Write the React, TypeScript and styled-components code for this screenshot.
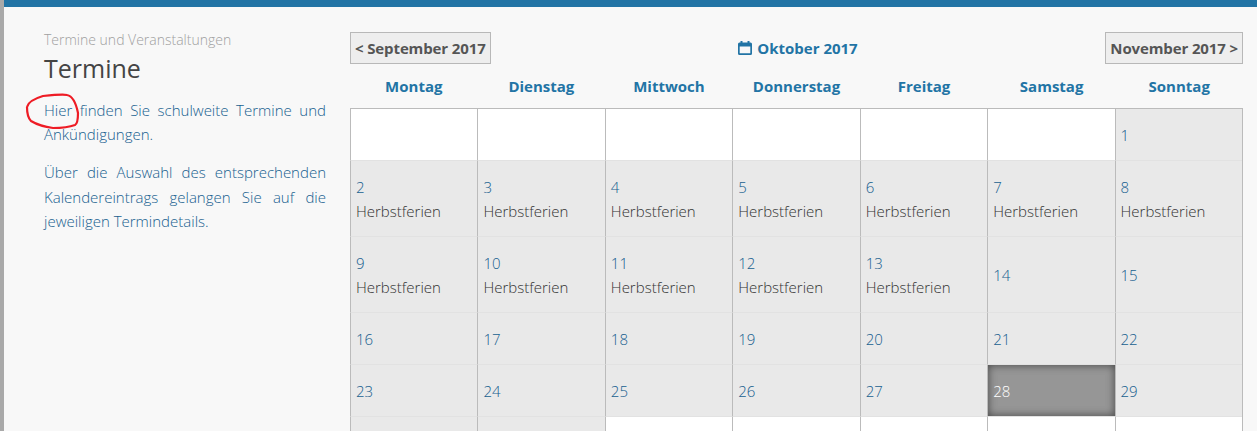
import styled, { createGlobalStyle } from 'styled-components';

const GlobalStyle = createGlobalStyle`
  html, body {
    margin: 0;
    height: 431px;
    overflow: hidden;
    background-color: #f8f8f8;
    font-family: 'Open Sans', sans-serif;
    font-size: 15px;
    color: #444444;
  }
`;

const Frame = styled.div`
  height: 431px;
  overflow: hidden;
  border-left: 4px solid #a9a9a9;
  box-sizing: border-box;
`;

const Page = styled.div`
  border-top: 7px solid #2274a5;
  display: flex;
  padding-left: 40px;
  gap: 24px;
`;

const Sidebar = styled.aside`
  position: relative;
  width: 282px;
  flex-shrink: 0;
  padding-top: 24px;
`;

const Breadcrumb = styled.div`
  font-size: 14px;
  line-height: 18px;
  font-weight: 300;
  color: #a0a0a0;
`;

const Title = styled.h1`
  margin: 2px 0 13px;
  font-size: 25px;
  line-height: 34px;
  font-weight: 400;
  color: #444444;
`;

const Text = styled.p`
  margin: 0 0 13.5px;
  font-size: 15px;
  line-height: 24.4px;
  font-weight: 300;
  color: #17608f;
  text-align: justify;
`;

const Scribble = styled.svg`
  position: absolute;
  left: -19px;
  top: 86px;
`;

const Main = styled.main`
  width: 893px;
  flex-shrink: 0;
`;

const Nav = styled.div`
  display: flex;
  justify-content: space-between;
  align-items: center;
  margin-top: 25px;
`;

const NavButton = styled.button`
  height: 32px;
  padding: 0 4px;
  background-color: #eeeeee;
  border: 1px solid #b8b8b8;
  font-family: inherit;
  font-size: 15px;
  font-weight: 700;
  letter-spacing: -0.12px;
  color: #555555;
`;

const Month = styled.div`
  display: flex;
  align-items: center;
  gap: 5px;
  font-size: 15px;
  font-weight: 700;
  color: #2274a5;
`;

const Weekdays = styled.div`
  display: grid;
  grid-template-columns: repeat(7, 1fr);
  height: 44px;
`;

const Weekday = styled.div`
  display: flex;
  align-items: center;
  justify-content: center;
  font-size: 15px;
  font-weight: 700;
  color: #2274a5;
`;

const Grid = styled.div`
  display: grid;
  grid-template-columns: repeat(7, 1fr);
  border-top: 1px solid #bbbbbb;
  border-right: 1px solid #bbbbbb;
`;

const Cell = styled.div<{ $filled?: boolean; $today?: boolean }>`
  box-sizing: border-box;
  display: flex;
  flex-direction: column;
  justify-content: center;
  min-height: 52px;
  padding: 14px 5px 13px;
  line-height: 24px;
  border-left: 1px solid #bbbbbb;
  border-bottom: 1px solid #e2e2e2;
  font-weight: 300;
  background-color: ${p => (p.$today ? '#969696' : p.$filled ? '#e9e9e9' : '#ffffff')};
  box-shadow: ${p => (p.$today ? 'inset 0 0 8px #444444' : 'none')};
`;

const DayNumber = styled.div<{ $today?: boolean }>`
  color: ${p => (p.$today ? '#ffffff' : '#17608f')};
`;

const Event = styled.div`
  color: #333333;
`;

const days = ['Montag', 'Dienstag', 'Mittwoch', 'Donnerstag', 'Freitag', 'Samstag', 'Sonntag'];
const holidays = [2, 3, 4, 5, 6, 7, 8, 9, 10, 11, 12, 13];
const cells: (number | null)[] = [
  null, null, null, null, null, null, 1,
  ...Array.from({ length: 30 }, (_, i) => i + 2),
  null, null, null, null, null,
];

function CalendarIcon() {
  return (
    <svg width="14" height="14" viewBox="0 0 14 14" fill="#2274a5">
      <rect x="2.5" y="0" width="2" height="3" />
      <rect x="9.5" y="0" width="2" height="3" />
      <path d="M1.5 1.5h11a1.5 1.5 0 0 1 1.5 1.5v9.5a1.5 1.5 0 0 1-1.5 1.5h-11a1.5 1.5 0 0 1-1.5-1.5V3a1.5 1.5 0 0 1 1.5-1.5zM1.7 5.5v6.8h10.6V5.5z" fillRule="evenodd" />
    </svg>
  );
}

export default function App() {
  return (
    <>
      <GlobalStyle />
      <Frame>
        <Page>
          <Sidebar>
            <Breadcrumb>Termine und Veranstaltungen</Breadcrumb>
            <Title>Termine</Title>
            <Text>Hier finden Sie schulweite Termine und Ankündigungen.</Text>
            <Text>
              Über die Auswahl des entsprechenden Kalendereintrags gelangen Sie auf die jeweiligen
              Termindetails.
            </Text>
            <Scribble width="60" height="40" viewBox="0 0 60 40">
              <path
                d="M2 14 C3 9 8 6 18 3 C28 2 38 1 42 2 C47 3 51 10 53 20 C53 27 52 31 50 32 C42 35 33 35 28 35 C20 34 11 31 6 28 C3 25 2 19 2 14"
                fill="none"
                stroke="#ee1c25"
                strokeWidth="2.2"
              />
            </Scribble>
          </Sidebar>
          <Main>
            <Nav>
              <NavButton>&lt; September 2017</NavButton>
              <Month>
                <CalendarIcon />
                Oktober 2017
              </Month>
              <NavButton>November 2017 &gt;</NavButton>
            </Nav>
            <Weekdays>
              {days.map(d => (
                <Weekday key={d}>{d}</Weekday>
              ))}
            </Weekdays>
            <Grid>
              {cells.map((n, i) => (
                <Cell key={i} $filled={n !== null} $today={n === 28}>
                  {n !== null && <DayNumber $today={n === 28}>{n}</DayNumber>}
                  {n !== null && holidays.includes(n) && <Event>Herbstferien</Event>}
                </Cell>
              ))}
            </Grid>
          </Main>
        </Page>
      </Frame>
    </>
  );
}
